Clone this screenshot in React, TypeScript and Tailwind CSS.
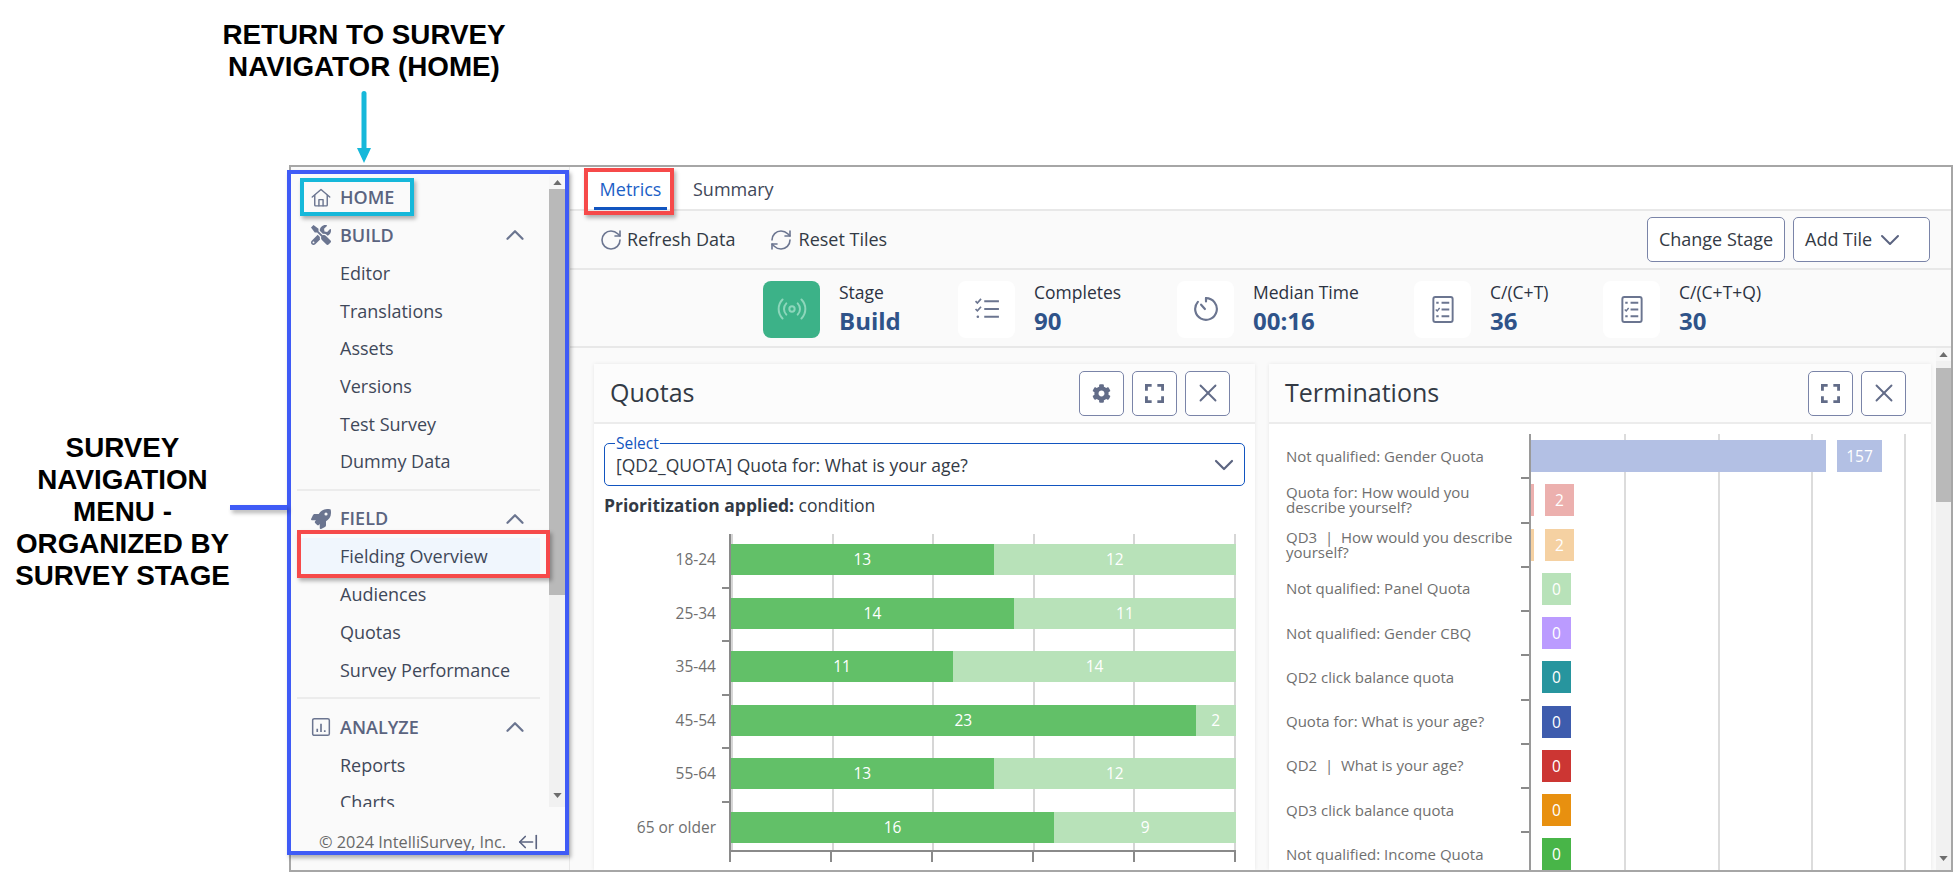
import React, { ReactNode } from 'react';
import { ChevronDown, ChevronUp, Radio, RefreshCw, RotateCw, X, ArrowLeftFromLine } from 'lucide-react';
import { FaCog, FaRocket, FaTools } from 'react-icons/fa';

const HomeIcon = () => (
  <svg viewBox="0 0 24 24" className="w-[21px] h-[21px]" fill="none" stroke="currentColor" strokeWidth="1.7" strokeLinejoin="round" strokeLinecap="round">
    <path d="M1.5 11.5 12 2.5l10.5 9" />
    <path d="M4.5 9.5V21a1 1 0 0 0 1 1h13a1 1 0 0 0 1-1V9.5" />
    <path d="M9.5 22v-7.5h5V22" />
  </svg>
);

const AnalyzeIcon = () => (
  <svg viewBox="0 0 24 24" className="w-[20px] h-[20px]" fill="none" stroke="currentColor" strokeWidth="1.8">
    <rect x="2" y="2" width="20" height="20" rx="2" />
    <path d="M7.5 18v-4M12 18V8M16.5 18v-2" strokeWidth="2" />
  </svg>
);

const ChecklistIcon = () => (
  <svg viewBox="0 0 28 24" className="w-[26px] h-[22px]" fill="none" stroke="currentColor" strokeWidth="2.2">
    <path d="M11 3.5h16M11 12h16M11 20.500h16" />
    <path d="M1.500 3.500 3.500 5.500 7.500 1M1.500 12 3.500 14 7.500 9.500" strokeWidth="1.8" />
    <circle cx="4" cy="20.500" r="1.400" fill="currentColor" stroke="none" />
  </svg>
);

const TimerIcon = () => (
  <svg viewBox="0 0 24 24" className="w-[26px] h-[26px]" fill="none" stroke="currentColor" strokeWidth="2" strokeLinecap="round">
    <path d="M12 2a10 10 0 1 1-7.500 3.400" />
    <path d="M12 2v3M7.500 8l3.500 4" />
  </svg>
);

const SheetIcon = () => (
  <svg viewBox="0 0 22 28" className="w-[22px] h-[27px]" fill="none" stroke="currentColor" strokeWidth="2">
    <rect x="1" y="1" width="20" height="26" rx="2" />
    <path d="M9.500 7h8M9.500 14h8M9.500 21h8" />
    <path d="M4 7h2.500M4 21h2.500" />
    <path d="M3.500 14l1.500 1.500 2.500-3" strokeWidth="1.500" />
  </svg>
);

const ExpandIcon = () => (
  <svg viewBox="0 0 20 20" className="w-[19px] h-[19px]" fill="none" stroke="currentColor" strokeWidth="3">
    <path d="M1.500 7V1.500H7M13 1.500h5.500V7M18.500 13v5.500H13M7 18.500H1.500V13" />
  </svg>
);

const Triangle = ({ down = false }: { down?: boolean }) => (
  <svg viewBox="0 0 10 6" className="w-[9px] h-[5px] text-[#6d6d6d]" fill="currentColor">
    <path d={down ? 'M0 0h10L5 6z' : 'M0 6h10L5 0z'} />
  </svg>
);

const Scrollbar = ({ className, thumb }: { className: string; thumb: string }) => (
  <div className={`flex flex-col bg-[#f1f1f1] ${className}`}>
    <div className="h-[13px] flex items-center justify-center bg-[#f7f7f7]">
      <Triangle />
    </div>
    <div className={`bg-[#b9b9b9] ${thumb}`} />
    <div className="flex-1" />
    <div className="h-[24px] flex items-center justify-center">
      <Triangle down />
    </div>
  </div>
);

const MenuSection = ({ icon, label, items, active }: { icon: ReactNode; label: string; items: string[]; active?: string }) => (
  <div>
    <div className="h-[38.5px] flex items-center pl-[14px] text-[#6b7590]">
      <span className="w-[20px] flex justify-center">{icon}</span>
      <span className="ml-[9px] text-[18px] font-semibold text-[#5b6480]">{label}</span>
      <ChevronUp className="ml-auto mr-[10px] w-[30px] h-[30px]" strokeWidth={1.8} />
    </div>
    {items.map((item) => (
      <div
        key={item}
        className={`h-[37.7px] flex items-center pl-[43px] text-[18px] text-[#3f4859] ${item === active ? 'bg-[#f0f6fd]' : ''}`}
      >
        {item}
      </div>
    ))}
  </div>
);

const Sidebar = () => (
  <aside className="w-[279px] shrink-0 bg-[#fafafa] flex flex-col border-r border-[#e8e8e8]">
    <div className="flex h-[640px] pt-[9px]">
      <nav className="w-[258px] overflow-hidden pt-[2px] pl-[6px] pr-[9px]">
        <div className="h-[38px] flex items-center pl-[14px] text-[#6b7590]">
          <span className="w-[20px] flex justify-center"><HomeIcon /></span>
          <span className="ml-[9px] text-[18px] font-semibold text-[#5b6480]">HOME</span>
        </div>
        <MenuSection
          icon={<FaTools className="w-[20px] h-[20px]" />}
          label="BUILD"
          items={['Editor', 'Translations', 'Assets', 'Versions', 'Test Survey', 'Dummy Data']}
        />
        <div className="border-t-2 border-[#ececec] mt-[8px] mb-[9px]" />
        <MenuSection
          icon={<FaRocket className="w-[20px] h-[20px]" />}
          label="FIELD"
          items={['Fielding Overview', 'Audiences', 'Quotas', 'Survey Performance']}
          active="Fielding Overview"
        />
        <div className="border-t-2 border-[#ececec] mt-[8px] mb-[9px]" />
        <MenuSection icon={<AnalyzeIcon />} label="ANALYZE" items={['Reports', 'Charts']} />
      </nav>
      <Scrollbar className="w-[17px]" thumb="h-[406px]" />
    </div>
    <div className="flex items-center pl-[28px] pt-[23px] text-[16.3px] text-[#686868]">
      <span className="w-[198px]">© 2024 IntelliSurvey, Inc.</span>
      <ArrowLeftFromLine className="w-[22px] h-[22px] text-[#5b6480]" strokeWidth={1.8} />
    </div>
  </aside>
);

const stats = [
  { label: 'Completes', value: '90', icon: <ChecklistIcon />, width: 'w-[219px]' },
  { label: 'Median Time', value: '00:16', icon: <TimerIcon />, width: 'w-[237px]' },
  { label: 'C/(C+T)', value: '36', icon: <SheetIcon />, width: 'w-[189px]' },
  { label: 'C/(C+T+Q)', value: '30', icon: <SheetIcon />, width: 'w-[200px]' },
];

const Stat = ({ label, value, tile, width }: { label: string; value: string; tile: ReactNode; width: string }) => (
  <div className={`flex items-center ${width}`}>
    {tile}
    <div className="ml-[19px]">
      <div className="text-[17.5px] leading-[22px] text-[#2b3242]">{label}</div>
      <div className="text-[24px] leading-[32px] font-bold text-[#2f5389] mt-[2px]">{value}</div>
    </div>
  </div>
);

const IconTile = ({ children }: { children: ReactNode }) => (
  <div className="w-[57px] h-[57px] rounded-[8px] bg-white flex items-center justify-center text-[#6b7590]">{children}</div>
);

const IconButton = ({ children }: { children: ReactNode }) => (
  <button className="w-[45px] h-[45px] rounded-[5px] border border-[#7a84a8] bg-white flex items-center justify-center text-[#626c88]">
    {children}
  </button>
);

const CardHeader = ({ title, children }: { title: string; children: ReactNode }) => (
  <div className="h-[60px] shrink-0 bg-[#fcfcfc] border-b-2 border-[#ececec] flex items-center pl-[16px]">
    <span className="text-[25px] text-[#333a45]">{title}</span>
    <div className="ml-auto flex gap-[8px] pr-[25px]">{children}</div>
  </div>
);

const closeIcon = <X className="w-[30px] h-[30px]" strokeWidth={1.5} />;

const quotaRows = [
  { label: '18-24', filled: 13, open: 12 },
  { label: '25-34', filled: 14, open: 11 },
  { label: '35-44', filled: 11, open: 14 },
  { label: '45-54', filled: 23, open: 2 },
  { label: '55-64', filled: 13, open: 12 },
  { label: '65 or older', filled: 16, open: 9 },
];

const QuotasCard = () => (
  <section className="w-[661px] shrink-0 bg-white shadow-[0_0_4px_rgba(0,0,0,0.08)] flex flex-col overflow-hidden">
    <CardHeader title="Quotas">
      <IconButton><FaCog className="w-[19px] h-[19px]" /></IconButton>
      <IconButton><ExpandIcon /></IconButton>
      <IconButton>{closeIcon}</IconButton>
    </CardHeader>
    <div className="px-[10px] pt-[19px]">
      <div className="relative h-[43px] rounded-[5px] border-[1.5px] border-[#1255c0] flex items-center pl-[11px] pr-[4px] text-[17.5px] text-[#333a45]">
        <span className="absolute left-[10px] -top-[10px] bg-white px-[1px] text-[15.5px] leading-[18px] text-[#1255c0]">Select</span>
        <span className="pt-[2px]">[QD2_QUOTA] Quota for: What is your age?</span>
        <ChevronDown className="ml-auto w-[32px] h-[32px] text-[#5b6480]" strokeWidth={1.6} />
      </div>
      <div className="mt-[9px] h-[20px] leading-[20px] text-[17.5px] text-[#333a45]">
        <b className="font-bold">Prioritization applied:</b> condition
      </div>
      <div className="flex mt-[19px]">
        <div className="w-[112px] shrink-0 flex flex-col">
          {quotaRows.map((r) => (
            <div key={r.label} className="h-[53.6px] pt-[10px] text-right text-[15.5px] leading-[31px] text-[#6f6f6f]">{r.label}</div>
          ))}
        </div>
        <div className="ml-[13px] w-[507px]">
          <div className="relative h-[318px] border-l-2 border-b-2 border-[#8a8a8a]">
            <div className="absolute inset-0 flex justify-between">
              {[0, 1, 2, 3, 4, 5].map((i) => (
                <div key={i} className="w-[2px] bg-[#d6d6d6]" />
              ))}
            </div>
            {quotaRows.slice(1).map((r, i) => (
              <div key={r.label} className="absolute -left-[9px] w-[8px] h-[2px] bg-[#8a8a8a]" style={{ top: 53.6 * (i + 1) - 1 }} />
            ))}
            <div className="relative h-full overflow-hidden">
              {quotaRows.map((r) => (
                <div key={r.label} className="h-[53.6px] pt-[10px]">
                  <div className="flex h-[31px] text-white text-[15.5px] leading-[31px] text-center">
                    <div className="bg-[#62c068]" style={{ width: `${(r.filled / 25) * 100}%` }}>{r.filled}</div>
                    <div className="bg-[#b8e2b9]" style={{ width: `${(r.open / 25) * 100}%` }}>{r.open}</div>
                  </div>
                </div>
              ))}
            </div>
          </div>
          <div className="flex justify-between h-[10px]">
            {[0, 1, 2, 3, 4, 5].map((i) => (
              <div key={i} className="w-[2px] bg-[#8a8a8a]" />
            ))}
          </div>
        </div>
      </div>
    </div>
  </section>
);

const termRows = [
  { label: 'Not qualified: Gender Quota', value: 157, bar: 295, box: 'w-[45px]', color: 'bg-[#b3c0e4]' },
  { label: 'Quota for: How would you describe yourself?', value: 2, bar: 3, box: 'w-[29px]', color: 'bg-[#ecb0ae]' },
  { label: 'QD3 \u00a0|\u00a0 How would you describe yourself?', value: 2, bar: 3, box: 'w-[29px]', color: 'bg-[#f5d1a2]' },
  { label: 'Not qualified: Panel Quota', value: 0, bar: 0, box: 'w-[29px]', color: 'bg-[#b8e2b9]' },
  { label: 'Not qualified: Gender CBQ', value: 0, bar: 0, box: 'w-[29px]', color: 'bg-[#bb9bff]' },
  { label: 'QD2 click balance quota', value: 0, bar: 0, box: 'w-[29px]', color: 'bg-[#27959e]' },
  { label: 'Quota for: What is your age?', value: 0, bar: 0, box: 'w-[29px]', color: 'bg-[#3e5cad]' },
  { label: 'QD2 \u00a0|\u00a0 What is your age?', value: 0, bar: 0, box: 'w-[29px]', color: 'bg-[#cc3633]' },
  { label: 'QD3 click balance quota', value: 0, bar: 0, box: 'w-[29px]', color: 'bg-[#e8900f]' },
  { label: 'Not qualified: Income Quota', value: 0, bar: 0, box: 'w-[29px]', color: 'bg-[#48b548]' },
];

const TerminationsCard = () => (
  <section className="w-[662px] shrink-0 bg-white shadow-[0_0_4px_rgba(0,0,0,0.08)] flex flex-col overflow-hidden">
    <CardHeader title="Terminations">
      <IconButton><ExpandIcon /></IconButton>
      <IconButton>{closeIcon}</IconButton>
    </CardHeader>
    <div className="flex pt-[10px] pl-[17px]">
      <div className="w-[243px] shrink-0">
        {termRows.map((r) => (
          <div key={r.label} className="h-[44.25px] flex items-center">
            <span className="w-[232px] text-[15px] leading-[15px] text-[#6f6f6f]">{r.label}</span>
          </div>
        ))}
      </div>
      <div className="relative w-[377px] border-l-2 border-[#9a9a9a]">
        <div className="absolute inset-0 flex justify-between">
          <div className="w-[2px]" />
          {[1, 2, 3, 4].map((i) => (
            <div key={i} className="w-[2px] bg-[#dcdcdc]" />
          ))}
        </div>
        {termRows.slice(1).map((r, i) => (
          <div key={r.label} className="absolute -left-[10px] w-[8px] h-[2px] bg-[#8a8a8a]" style={{ top: 44.25 * (i + 1) - 1 }} />
        ))}
        {termRows.map((r) => (
          <div key={r.label} className="relative h-[44.25px] pt-[6px]">
            <div className="flex h-[32px] gap-[11px]">
              <div className={r.color} style={{ width: r.bar }} />
              <div className={`${r.box} ${r.color} text-white text-[15.5px] leading-[32px] text-center`}>{r.value}</div>
            </div>
          </div>
        ))}
      </div>
    </div>
  </section>
);

const Overlay = ({ className }: { className: string }) => (
  <div className={`absolute pointer-events-none shadow-[2px_3px_4px_rgba(0,0,0,0.3)] ${className}`} />
);

export default function App() {
  return (
    <div className="relative w-[1953px] h-[872px] overflow-hidden bg-white font-['Open_Sans',sans-serif]">
      <header className="h-[165px] ml-[204px] w-[320px] pt-[19px] flex flex-col items-center">
        <h1 className="font-['Liberation_Sans',sans-serif] font-bold text-[27.8px] leading-[32px] text-center text-black">
          RETURN TO SURVEY
          <br />
          NAVIGATOR (HOME)
        </h1>
        <svg viewBox="0 0 14 72" className="w-[14px] h-[72px] mt-[8px] text-[#16b8da]" fill="currentColor">
          <rect x="4.500" y="0" width="5" height="60" rx="2.500" />
          <path d="M0 57h14L7 72z" />
        </svg>
      </header>
      <div className="flex h-[707px]">
        <div className="w-[289px] shrink-0 relative">
          <p className="w-[245px] pt-[267px] font-['Liberation_Sans',sans-serif] font-bold text-[27.8px] leading-[32px] text-center text-black">
            SURVEY
            <br />
            NAVIGATION
            <br />
            MENU -
            <br />
            ORGANIZED BY
            <br />
            SURVEY STAGE
          </p>
        </div>
        <div className="flex-1 flex border-2 border-[#a6a6a6] min-w-0">
          <Sidebar />
          <main className="flex-1 flex flex-col min-w-0">
            <div className="h-[44px] shrink-0 bg-white border-b-2 border-[#e8e8e8] flex pl-[24px] text-[18px]">
              <div className="w-[73px] h-[43px] border-b-[3px] border-[#1255c0] text-[#1c5fc7] text-center leading-[44px]">Metrics</div>
              <div className="ml-[26px] leading-[44px] text-[#3f4859]">Summary</div>
            </div>
            <div className="h-[59px] shrink-0 bg-[#fafafa] border-b-2 border-[#e8e8e8] flex items-center pl-[29px] text-[18px] font-medium text-[#333a45]">
              <RotateCw className="w-[24px] h-[24px] text-[#6b7590]" strokeWidth={1.6} />
              <span className="ml-[4px]">Refresh Data</span>
              <RefreshCw className="ml-[33px] w-[24px] h-[24px] text-[#6b7590]" strokeWidth={1.6} />
              <span className="ml-[6px]">Reset Tiles</span>
              <button className="ml-auto h-[45px] w-[138px] rounded-[5px] border border-[#7a84a8] bg-white font-medium">Change Stage</button>
              <button className="ml-[8px] mr-[21px] h-[45px] w-[137px] rounded-[5px] border border-[#7a84a8] bg-white flex items-center pl-[11px] font-medium">
                Add Tile
                <ChevronDown className="ml-[2px] w-[32px] h-[32px] text-[#5b6480]" strokeWidth={1.5} />
              </button>
            </div>
            <div className="h-[78px] shrink-0 pt-[2px] bg-[#fafafa] border-b-2 border-[#e8e8e8] flex items-center pl-[193px]">
              <Stat
                label="Stage"
                value="Build"
                width="w-[195px]"
                tile={
                  <div className="w-[57px] h-[57px] rounded-[8px] bg-[#3cb288] flex items-center justify-center text-[#8dd6bb]">
                    <Radio className="w-[32px] h-[32px]" strokeWidth={1.5} />
                  </div>
                }
              />
              {stats.map((s) => (
                <Stat key={s.label} label={s.label} value={s.value} width={s.width} tile={<IconTile>{s.icon}</IconTile>} />
              ))}
            </div>
            <div className="flex-1 flex min-h-0 bg-[#fafafa]">
              <div className="flex-1 flex gap-[14px] pl-[24px] pt-[16px] min-w-0 overflow-hidden">
                <QuotasCard />
                <TerminationsCard />
              </div>
              <Scrollbar className="w-[15px]" thumb="h-[134px] mt-[7px]" />
            </div>
          </main>
        </div>
      </div>
      {/* annotation boxes drawn on top of the screenshot */}
      <Overlay className="left-[287px] top-[170px] w-[282px] h-[685px] border-4 border-[#3f5bf6]" />
      <Overlay className="left-[230px] top-[505px] w-[57px] h-[5px] bg-[#3f5bf6]" />
      <Overlay className="left-[300px] top-[178px] w-[114px] h-[38px] border-4 border-[#16b8da]" />
      <Overlay className="left-[297px] top-[530px] w-[253px] h-[48px] border-4 border-[#f64a4a]" />
      <Overlay className="left-[584px] top-[168px] w-[90px] h-[47px] border-4 border-[#f64a4a]" />
    </div>
  );
}
